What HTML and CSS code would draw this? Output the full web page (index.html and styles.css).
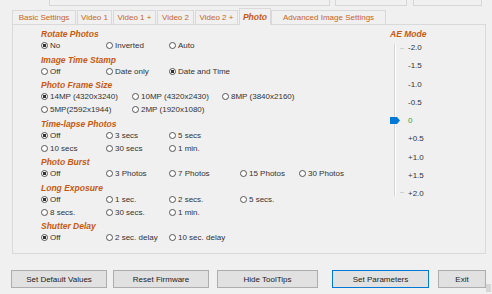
FILE: index.html
```html
<!DOCTYPE html>
<html lang="en">
<head>
    <meta charset="UTF-8">
    <title>Camera Settings - Photo</title>
    <link rel="stylesheet" href="styles.css">
</head>
<body>
    <div class="top-strip">
        <div class="stub stub-wide"></div>
        <div class="stub stub-mid"></div>
        <div class="stub stub-narrow"></div>
    </div>

    <div class="tabs">
        <div class="tab tab-basic">Basic Settings</div>
        <div class="tab tab-v1">Video 1</div>
        <div class="tab tab-v1p">Video 1 +</div>
        <div class="tab tab-v2">Video 2</div>
        <div class="tab tab-v2p">Video 2 +</div>
        <div class="tab tab-photo active">Photo</div>
        <div class="tab tab-adv">Advanced Image Settings</div>
    </div>

    <div class="page">
        <div class="options">
            <div class="group-title">Rotate Photos</div>
            <div class="row">
                <label class="opt"><input type="radio" name="rotate" checked>No</label>
                <label class="opt"><input type="radio" name="rotate">Inverted</label>
                <label class="opt"><input type="radio" name="rotate">Auto</label>
            </div>

            <div class="group-title">Image Time Stamp</div>
            <div class="row">
                <label class="opt"><input type="radio" name="stamp">Off</label>
                <label class="opt"><input type="radio" name="stamp">Date only</label>
                <label class="opt"><input type="radio" name="stamp" checked>Date and Time</label>
            </div>

            <div class="group-title">Photo Frame Size</div>
            <div class="row row-wide">
                <label class="opt"><input type="radio" name="frame" checked>14MP (4320x3240)</label>
                <label class="opt"><input type="radio" name="frame">10MP (4320x2430)</label>
                <label class="opt"><input type="radio" name="frame">8MP (3840x2160)</label>
            </div>
            <div class="row row-wide">
                <label class="opt"><input type="radio" name="frame">5MP(2592x1944)</label>
                <label class="opt"><input type="radio" name="frame">2MP (1920x1080)</label>
            </div>

            <div class="group-title">Time-lapse Photos</div>
            <div class="row">
                <label class="opt"><input type="radio" name="lapse" checked>Off</label>
                <label class="opt"><input type="radio" name="lapse">3 secs</label>
                <label class="opt"><input type="radio" name="lapse">5 secs</label>
            </div>
            <div class="row">
                <label class="opt"><input type="radio" name="lapse">10 secs</label>
                <label class="opt"><input type="radio" name="lapse">30 secs</label>
                <label class="opt"><input type="radio" name="lapse">1 min.</label>
            </div>

            <div class="group-title">Photo Burst</div>
            <div class="row">
                <label class="opt"><input type="radio" name="burst" checked>Off</label>
                <label class="opt"><input type="radio" name="burst">3 Photos</label>
                <label class="opt"><input type="radio" name="burst">7 Photos</label>
                <label class="opt"><input type="radio" name="burst">15 Photos</label>
                <label class="opt"><input type="radio" name="burst">30 Photos</label>
            </div>

            <div class="group-title">Long Exposure</div>
            <div class="row">
                <label class="opt"><input type="radio" name="expo" checked>Off</label>
                <label class="opt"><input type="radio" name="expo">1 sec.</label>
                <label class="opt"><input type="radio" name="expo">2 secs.</label>
                <label class="opt"><input type="radio" name="expo">5 secs.</label>
            </div>
            <div class="row">
                <label class="opt"><input type="radio" name="expo">8 secs.</label>
                <label class="opt"><input type="radio" name="expo">30 secs.</label>
                <label class="opt"><input type="radio" name="expo">1 min.</label>
            </div>

            <div class="group-title">Shutter Delay</div>
            <div class="row">
                <label class="opt"><input type="radio" name="delay" checked>Off</label>
                <label class="opt"><input type="radio" name="delay">2 sec. delay</label>
                <label class="opt"><input type="radio" name="delay">10 sec. delay</label>
            </div>
        </div>

        <div class="ae">
            <div class="group-title">AE Mode</div>
            <div class="slider">
                <div class="track">
                    <div class="tick tick-top"></div>
                    <div class="tick tick-bottom"></div>
                    <svg class="thumb" width="10" height="7" viewBox="0 0 10 7">
                        <path d="M0 0 H7 L10 3.5 L7 7 H0 Z" fill="#0078d7"/>
                    </svg>
                </div>
                <div class="scale">
                    <div>-2.0</div>
                    <div>-1.5</div>
                    <div>-1.0</div>
                    <div>-0.5</div>
                    <div class="current">0</div>
                    <div>+0.5</div>
                    <div>+1.0</div>
                    <div>+1.5</div>
                    <div>+2.0</div>
                </div>
            </div>
        </div>
    </div>

    <div class="buttons">
        <button class="btn btn-defaults">Set Default Values</button>
        <button class="btn btn-reset">Reset Firmware</button>
        <button class="btn btn-tips">Hide ToolTips</button>
        <button class="btn btn-set">Set Parameters</button>
        <button class="btn btn-exit">Exit</button>
    </div>

    <div class="grip"></div>
</body>
</html>
```

FILE: styles.css
```css
body {
    margin: 0;
    background-color: #f0f0f0;
    font-family: "Liberation Sans", Arial, sans-serif;
    font-size: 8px;
    color: #333;
    width: 492px;
    height: 294px;
    position: relative;
    overflow: hidden;
}
.top-strip {
    display: flex;
    margin-left: 49px;
    height: 6px;
}
.stub {
    height: 5px;
    border: 1px solid #d6d6d6;
    border-top: none;
}
.stub-wide {
    width: 279px;
}
.stub-mid {
    width: 70px;
    margin-left: 5px;
}
.stub-narrow {
    width: 67px;
    margin-left: 6px;
}
.tabs {
    display: flex;
    align-items: flex-end;
    margin-left: 12px;
    margin-top: 2px;
    height: 16px;
}
.tab {
    box-sizing: border-box;
    height: 14px;
    line-height: 13px;
    border: 1px solid #d9d9d9;
    border-bottom: none;
    text-align: center;
    color: #c8641e;
    margin-right: 1px;
    white-space: nowrap;
}
.tab-basic { width: 64px; }
.tab-v1 { width: 35px; }
.tab-v1p { width: 43px; }
.tab-v2 { width: 37px; }
.tab-v2p { width: 43px; }
.tab-photo { width: 32px; margin-right: 0; }
.tab-adv { width: 115px; }
.tab.active {
    height: 17px;
    line-height: 17px;
    margin-bottom: -1px;
    background-color: #f0f0f0;
    font-weight: bold;
    font-style: italic;
    font-size: 8.5px;
    color: #c65911;
    position: relative;
}
.page {
    box-sizing: border-box;
    display: flex;
    margin-left: 12px;
    width: 474px;
    height: 230px;
    border: 1px solid #d9d9d9;
    padding: 4px 0 0 28px;
}
.options {
    width: 349px;
}
.group-title {
    height: 10px;
    line-height: 10px;
    margin-top: 2.5px;
    font-weight: bold;
    font-style: italic;
    font-size: 8.5px;
    color: #c65911;
    white-space: nowrap;
}
.options > .group-title:first-child,
.ae > .group-title {
    margin-top: 0;
}
.row {
    display: grid;
    grid-template-columns: 65px 63px 71px 59px auto;
    height: 13px;
    align-items: center;
}
.row-wide {
    grid-template-columns: 91px 90px auto;
}
.opt {
    display: flex;
    align-items: center;
    white-space: nowrap;
}
.opt input {
    appearance: none;
    box-sizing: border-box;
    width: 7px;
    height: 7px;
    margin: 0 2px 0 0;
    border: 1px solid #555;
    border-radius: 50%;
    background-color: #fff;
}
.opt input:checked {
    background: radial-gradient(circle, #333 0, #333 1.6px, #fff 2px);
}
.slider {
    display: flex;
}
.track {
    position: relative;
    width: 18px;
    height: 152px;
    margin-top: 5px;
}
.track::before {
    content: "";
    position: absolute;
    left: 4px;
    top: 0;
    bottom: 0;
    width: 1px;
    background-color: #d4d4d4;
    border-right: 1px solid #fff;
}
.tick {
    position: absolute;
    left: 10px;
    width: 4px;
    height: 1px;
    background-color: #d0d0d0;
}
.tick-top { top: 4px; }
.tick-bottom { top: 148px; }
.thumb {
    position: absolute;
    left: 0;
    top: 73px;
}
.scale div {
    height: 18.3px;
    line-height: 18.3px;
    color: #333;
}
.scale .current {
    color: #2ea043;
}
.buttons {
    display: flex;
    margin: 16px 0 0 11px;
}
.btn {
    box-sizing: border-box;
    height: 18px;
    padding: 0;
    font-family: "Liberation Sans", Arial, sans-serif;
    font-size: 8px;
    color: #222;
    background-color: #e1e1e1;
    border: 1px solid #adadad;
    border-radius: 0;
}
.btn-defaults { width: 96px; }
.btn-reset { width: 96px; margin-left: 6px; }
.btn-tips { width: 101px; margin-left: 8px; }
.btn-set {
    width: 97px;
    margin-left: 14px;
    border-color: #0078d7;
}
.btn-exit { width: 48px; margin-left: 9px; }
.grip {
    position: absolute;
    right: 1px;
    bottom: 2px;
    width: 5px;
    height: 8px;
    background-image: radial-gradient(circle, #b8b8b8 0.6px, transparent 0.8px);
    background-size: 2px 2px;
}
```
